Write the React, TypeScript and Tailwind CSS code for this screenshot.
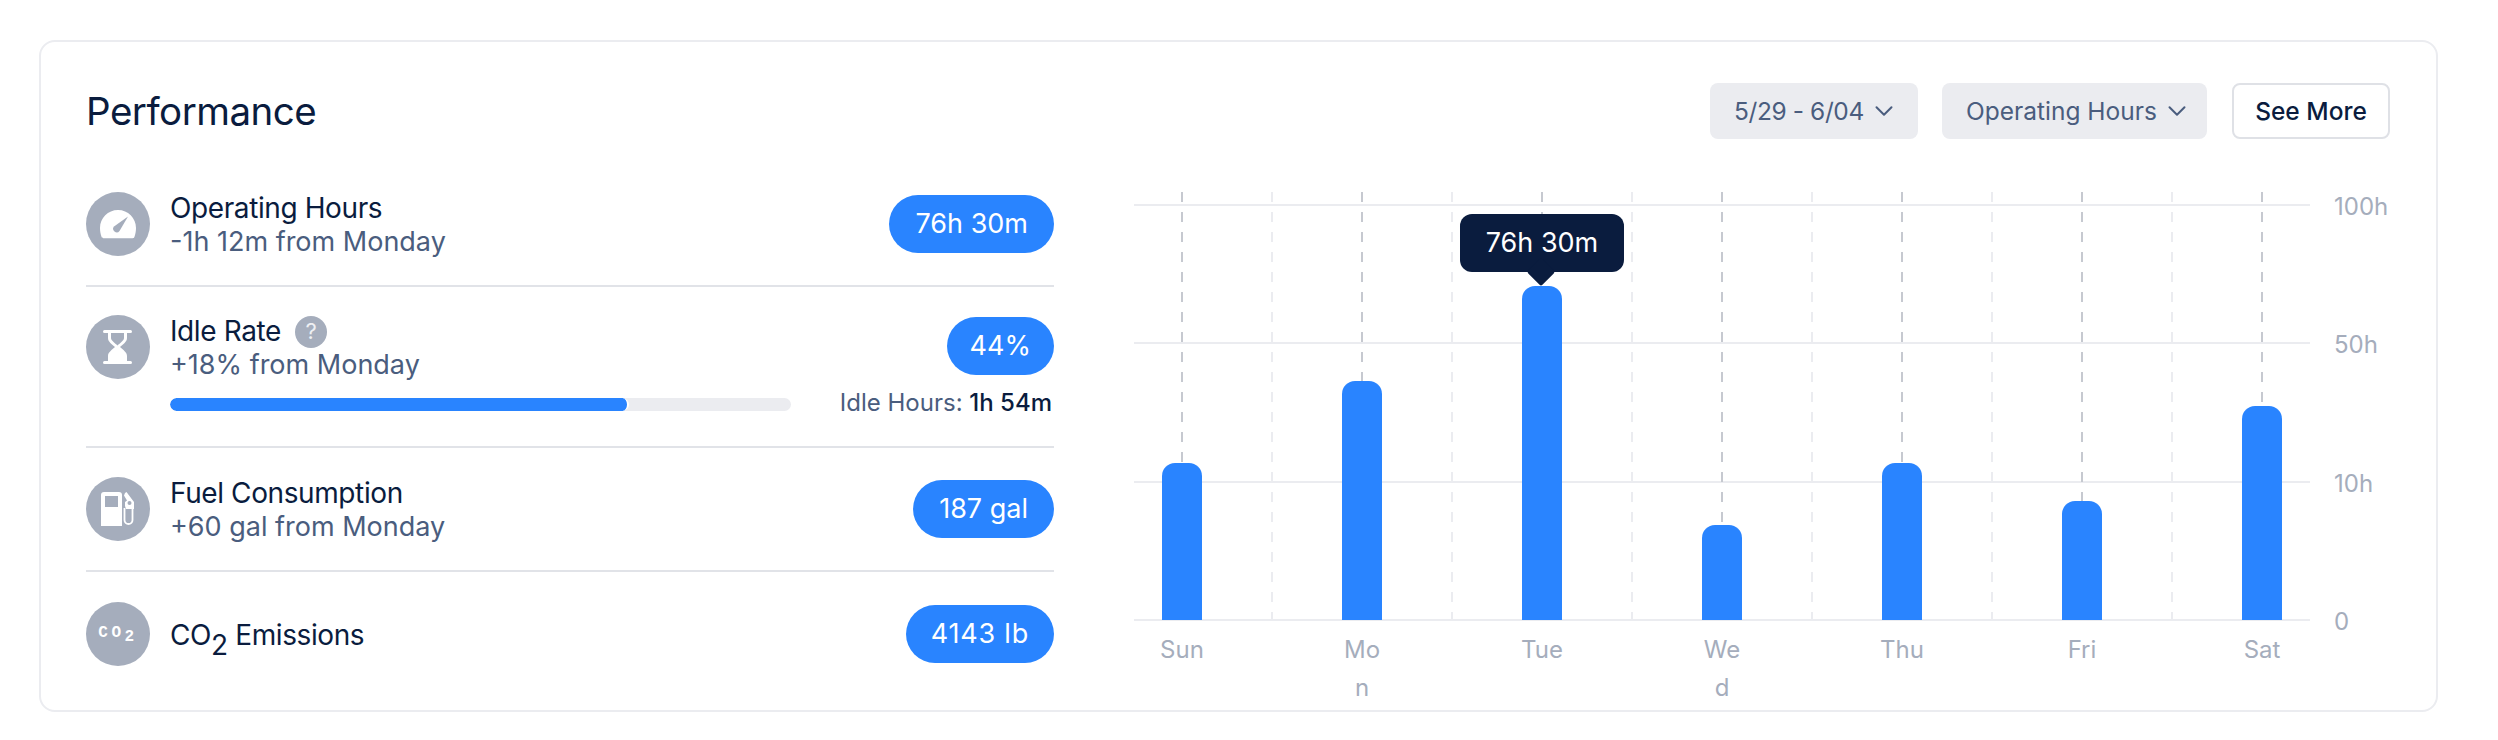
import { ChevronDown } from "lucide-react";
import type { ReactNode } from "react";

const bars = [
  { day: "Sun", top: 463 },
  { day: "Mon", top: 381 },
  { day: "Tue", top: 286 },
  { day: "Wed", top: 525 },
  { day: "Thu", top: 463 },
  { day: "Fri", top: 501 },
  { day: "Sat", top: 406 },
];

const gridY = [205, 343, 482, 620];
const ticks = ["100h", "50h", "10h", "0"];

function IconCircle({ children }: { children: ReactNode }) {
  return (
    <div className="w-[64px] h-[64px] shrink-0 rounded-full bg-[#a5adbc] flex items-center justify-center text-white">
      {children}
    </div>
  );
}

function GaugeIcon() {
  return (
    <svg width="38" height="30" viewBox="0 0 38 30">
      <path
        d="M19 1C9 1 1 9 1 19c0 3 .5 6 1.6 9 .3.8 1 1.2 1.8 1.2h29.2c.8 0 1.5-.4 1.8-1.2 1.100-3 1.600-6 1.600-9C37 9 29 1 19 1z"
        fill="#fff"
      />
      <path d="M15 17.500 29 7.500 20.500 22a3.500 3.500 0 0 1-5.500-4.500z" fill="#a5adbc" />
    </svg>
  );
}

function HourglassIcon() {
  return (
    <svg width="30" height="34" viewBox="0 0 30 34">
      <rect x="0" y="0" width="29" height="3" rx="1.500" fill="#fff" />
      <rect x="0" y="31" width="29" height="3" rx="1.500" fill="#fff" />
      <path d="M5 2v6c0 4 4 6 7 9-3 3-7 5-7 9v6h19v-6c0-4-4-6-7-9 3-3 7-5 7-9V2z" fill="#fff" />
      <path d="M8 3h13v5c0 2.500-4 5-6.500 7.500C12 13 8 10.500 8 8z" fill="#a5adbc" />
    </svg>
  );
}

function FuelIcon() {
  return (
    <svg width="34" height="34" viewBox="0 0 34 34">
      <path d="M3 0h15a3 3 0 0 1 3 3v31H0V3a3 3 0 0 1 3-3z" fill="#fff" />
      <rect x="4" y="4" width="13" height="11" fill="#a5adbc" />
      <path
        d="M23.500 16v12a4 4 0 0 0 8 0V14"
        fill="none"
        stroke="#fff"
        strokeWidth="1.800"
      />
      <path d="M24 1l1.500-1 7.500 10v7h-8l-1-3v-4l2-1.500-3-5z" fill="#fff" />
      <circle cx="28.500" cy="11" r="2" fill="#a5adbc" />
    </svg>
  );
}

function Co2Icon() {
  return (
    <span className="font-['Liberation_Mono',monospace] font-bold text-[16px] leading-none tracking-[3.500px] text-white mb-[3px]">
      CO
      <sub className="text-[16px]">2</sub>
    </span>
  );
}

function Pill({ children, className }: { children: ReactNode; className: string }) {
  return (
    <div className={`h-[58px] rounded-full bg-[#2984ff] text-white text-[27px] flex items-center ${className}`}>
      {children}
    </div>
  );
}

function Row({
  icon,
  title,
  sub,
  value,
  pillClass = "px-[26px]",
}: {
  icon: ReactNode;
  title: ReactNode;
  sub?: string;
  value: string;
  pillClass?: string;
}) {
  return (
    <div className="h-[124px] flex items-center justify-between border-b-2 border-[#e1e3e8] last:border-b-0">
      <div className="flex items-center gap-[20px]">
        {icon}
        <div className="pt-[2px]">
          <div className="text-[28px] tracking-[-0.4px] leading-[33px] text-[#0a1c3e]">{title}</div>
          {sub && <div className="text-[27px] leading-[34px] text-[#4a5d7e]">{sub}</div>}
        </div>
      </div>
      <Pill className={pillClass}>{value}</Pill>
    </div>
  );
}

function Chart() {
  return (
    <svg width="1176" height="430" className="mt-[2px] block" overflow="visible">
      {gridY.map((y) => (
        <line key={y} x1="0" x2="1176" y1={y - 192} y2={y - 192} stroke="#ebecf0" strokeWidth="2" />
      ))}
      {bars.map((_, i) => (
        <line
          key={i}
          x1={48 + i * 180}
          x2={48 + i * 180}
          y1="0"
          y2="428"
          stroke="#c6c9d0"
          strokeWidth="2"
          strokeDasharray="10 10"
        />
      ))}
      {bars.slice(0, 6).map((_, i) => (
        <line
          key={i}
          x1={138 + i * 180}
          x2={138 + i * 180}
          y1="0"
          y2="428"
          stroke="#ebecf0"
          strokeWidth="2"
          strokeDasharray="10 10"
        />
      ))}
      {bars.map((b, i) => {
        const x = 28 + i * 180;
        const t = b.top - 192;
        return (
          <path
            key={b.day}
            d={`M${x} 428V${t + 13}a13 13 0 0 1 13-13h14a13 13 0 0 1 13 13V428z`}
            fill="#2984ff"
          />
        );
      })}
    </svg>
  );
}

export default function App() {
  return (
    <div className="min-h-[740px] bg-white pt-[40px] pl-[39px] font-['Inter',sans-serif]">
      <div className="w-[2399px] h-[672px] border-2 border-[#ebecf0] rounded-[16px] px-[45px] pt-[41px]">
        <div className="flex items-center justify-between h-[56px] pr-[1px]">
          <h1 className="text-[38.5px] tracking-[-0.5px] text-[#0a1c3e] mt-[2px]">Performance</h1>
          <div className="flex">
            <button className="h-[56px] w-[208px] pl-[24px] rounded-[8px] bg-[#ebecf0] text-[#4a5d7e] text-[24.5px] tracking-[-0.4px] flex items-center gap-[5px]">
              5/29 - 6/04
              <ChevronDown size={30} strokeWidth={1.6} />
            </button>
            <button className="h-[56px] w-[265px] ml-[24px] pl-[24px] rounded-[8px] bg-[#ebecf0] text-[#4a5d7e] text-[24.5px] flex items-center gap-[5px]">
              Operating Hours
              <ChevronDown size={30} strokeWidth={1.6} />
            </button>
            <button className="h-[56px] w-[158px] ml-[25px] rounded-[8px] border-2 border-[#dfe1e6] bg-white text-[#0a1c3e] font-medium text-[24.5px] flex items-center justify-center">
              See More
            </button>
          </div>
        </div>

        <div className="flex mt-[23px]">
          <div className="w-[968px] shrink-0 pt-[1px]">
            <Row
              icon={
                <IconCircle>
                  <GaugeIcon />
                </IconCircle>
              }
              title="Operating Hours"
              sub="-1h 12m from Monday"
              value="76h 30m"
            />

            <div className="h-[161px] pt-[26px] flex justify-between border-b-2 border-[#e1e3e8]">
              <div className="flex gap-[20px]">
                <div className="mt-[2px]">
                  <IconCircle>
                    <HourglassIcon />
                  </IconCircle>
                </div>
                <div className="w-[621px] pt-[2px]">
                  <div className="flex items-center gap-[14px] text-[28px] tracking-[-0.4px] leading-[33px] text-[#0a1c3e]">
                    Idle Rate
                    <span className="w-[32px] h-[32px] rounded-full bg-[#a5adbc] text-[#eef0f3] text-[22px] flex items-center justify-center">
                      ?
                    </span>
                  </div>
                  <div className="text-[27px] leading-[34px] text-[#4a5d7e]">+18% from Monday</div>
                  <div className="mt-[16px] h-[13px] rounded-full bg-[#ebecf0] overflow-hidden">
                    <div className="w-[457px] h-full rounded-full bg-[#2984ff] border-r-2 border-white box-content" />
                  </div>
                </div>
              </div>
              <div className="flex flex-col items-end pt-[4px]">
                <Pill className="px-[23px]">44%</Pill>
                <div className="mt-[11px] pr-[2px] text-[24px] leading-[34px] text-[#4a5d7e]">
                  Idle Hours: <span className="font-medium text-[#0a1c3e]">1h 54m</span>
                </div>
              </div>
            </div>

            <Row
              icon={
                <IconCircle>
                  <FuelIcon />
                </IconCircle>
              }
              title="Fuel Consumption"
              sub="+60 gal from Monday"
              value="187 gal"
            />
            <Row
              icon={
                <IconCircle>
                  <Co2Icon />
                </IconCircle>
              }
              title={
                <>
                  CO<sub className="text-[28px] bottom-[-10px]">2</sub> Emissions
                </>
              }
              value="4143 lb"
              pillClass="px-[25px] tracking-[0.8px]"
            />
          </div>

          <div className="ml-[80px] pt-[28px]">
            <div className="flex relative">
              <div>
                <Chart />
                <div className="flex pl-[24px] gap-[132px] mt-[9px] text-[24px] leading-[38px] text-[#a5adbc]">
                  {bars.map((b) => (
                    <div key={b.day} className="w-[48px] text-center break-all">
                      {b.day}
                    </div>
                  ))}
                </div>
              </div>
              <div className="ml-[24px] mt-[2px] h-[445px] flex flex-col justify-between text-[24px] leading-[30px] text-[#a5adbc]">
                {ticks.map((t) => (
                  <div key={t}>{t}</div>
                ))}
              </div>

              <div className="absolute left-[326px] top-[24px] w-[164px] h-[58px] rounded-[12px] bg-[#0a1c3e] text-white text-[27px] flex items-center justify-center">
                76h 30m
                <div className="absolute left-[71px] top-[48px] w-[20px] h-[20px] rotate-45 rounded-[2px] bg-[#0a1c3e]" />
              </div>
            </div>
          </div>
        </div>
      </div>
    </div>
  );
}
